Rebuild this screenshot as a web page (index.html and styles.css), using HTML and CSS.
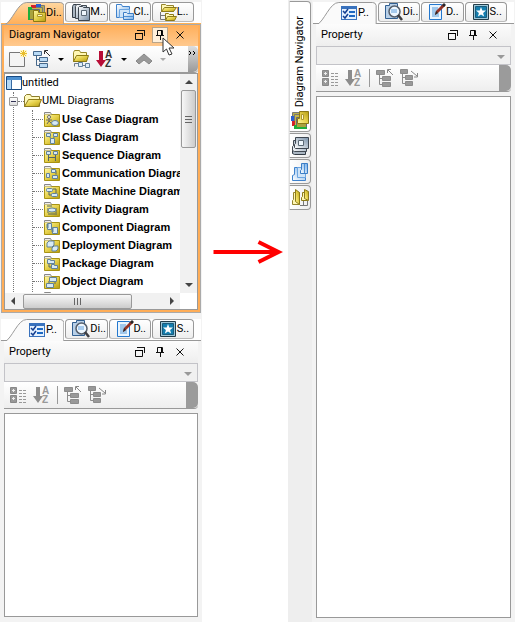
FILE: index.html
```html
<!DOCTYPE html>
<html lang="en">
<head>
<meta charset="utf-8">
<title>Diagram Navigator</title>
<link rel="stylesheet" href="styles.css">
</head>
<body>
<svg class="sprite" aria-hidden="true">
  <defs>
    <linearGradient id="gold" x1="0" y1="0" x2="1" y2="1"><stop offset="0" stop-color="#fff9a8"/><stop offset=".5" stop-color="#e5d04a"/><stop offset="1" stop-color="#b39b10"/></linearGradient>
    <linearGradient id="blue" x1="0" y1="0" x2="1" y2="1"><stop offset="0" stop-color="#fff"/><stop offset="1" stop-color="#75aee8"/></linearGradient>
    <linearGradient id="steel" x1="0" y1="0" x2="1" y2="1"><stop offset="0" stop-color="#fff"/><stop offset="1" stop-color="#7890a8"/></linearGradient>
    <linearGradient id="warm" x1="0" y1="0" x2="0" y2="1"><stop offset="0" stop-color="#ffd7a0"/><stop offset="1" stop-color="#ffae57"/></linearGradient>
  </defs>
  <symbol id="i-stack" viewBox="0 0 18 18">
    <path d="M6.500 11.500v-10h10v10z" fill="#b9b04a" stroke="#777"/><path d="M8 0h5v3H8z" fill="#2a5fd0"/>
    <path d="M3.500 13.500v-10h11v10z" fill="#c3b84c" stroke="#777"/><path d="M3 1h5v3H3zM3 4h1v10H3z" fill="#d2232a"/>
    <path d="M.5 15.500v-10h11v10z" fill="#a8a23e" stroke="#667"/><path d="M0 3h4v3H0zM0 6h2v10H0z" fill="#1fae3a"/>
    <path d="M5.500 17.500v-11h5v2h7v9z" fill="url(#gold)" stroke="#8b7913"/><path d="M9.500 10.500h5v2h-5z" fill="#fffbd0" stroke="#ad982b"/>
  </symbol>
  <symbol id="i-model" viewBox="0 0 18 18">
    <path d="M.5 14.500v-11l1-2h4l1 1h5v12z" fill="#aab6c2" stroke="#333c46"/><path d="M3.500 15.500v-12l1-2h4l1 1h5v13z" fill="url(#steel)" stroke="#414952"/>
    <path d="M6.500 17.500v-13l1-1h3l1 1h6v13z" fill="url(#steel)" stroke="#3d4650"/><path d="M9.500 7.500h5v5h-5z" fill="#eef6fc" stroke="#5a6874"/>
  </symbol>
  <symbol id="i-class" viewBox="0 0 18 18">
    <path d="M.5 14.500v-13h5l1 2h7v11z" fill="url(#blue)" stroke="#3f82cc"/><path d="M3.500 14.500v-8h10v8z" fill="#cfe4f8" stroke="#6ea6e0"/>
    <path d="M7.500 16.500v-7h3l1 1h6v6z" fill="url(#blue)" stroke="#3b7dc5"/><path d="M8 13.500h9" stroke="#4d8fd4"/>
  </symbol>
  <symbol id="i-logical" viewBox="0 0 18 18">
    <path d="M2.500 8.500v-7h4l1 1h7v6z" fill="#fff7b5" stroke="#95852d"/><path d="M2.500 8.500l3-4h12l-3 4z" fill="url(#gold)" stroke="#8d7b19"/>
    <path d="M1.500 9v7.500H7M1.500 12.500H6" fill="none" stroke="#777"/><path d="M6.500 16.500v-6h3l1 1h4v5z" fill="#fff7b5" stroke="#8d7b19"/><path d="M6.500 17.500l2-4h9l-2 4z" fill="url(#gold)" stroke="#8d7b19"/>
  </symbol>
  <symbol id="i-prop" viewBox="0 0 18 18">
    <path d="M1 2h16v14H1z" fill="#3972bd"/><path d="M2 5h14v10H2z" fill="#e4f1ff"/><path d="M9 8h6M9 12h6" stroke="#1d68c3" stroke-width="2"/><path d="M3 7l2 2 3-4M3 12l2 2 3-4" fill="none" stroke="#153f91" stroke-width="1.500"/>
  </symbol>
  <symbol id="i-look" viewBox="0 0 18 18">
    <path d="M.5 15.500v-13h4v-2h8v15z" fill="#b8d0e8" stroke="#315f91"/><circle cx="9.500" cy="8.500" r="5.500" fill="#eef7ff" stroke="#565f6c" stroke-width="1.500"/><path d="M6 6h6v4H6z" fill="#a7cbee"/><path d="M13 12l4 5" stroke="#3e3e42" stroke-width="2.500"/>
  </symbol>
  <symbol id="i-doc" viewBox="0 0 18 18">
    <path d="M1.500 1.500h12v15h-12z" fill="#e9f5ff" stroke="#2478ce"/><path d="M4 5h6M4 7h6M4 9h4M4 11h7M4 13h7" stroke="#569ad8"/><path d="M7 12l1-4 7-7 2 2-7 7z" fill="#943326"/><path d="M7 12l1-4 2 2zM14 2l2-2 2 2-2 2z" fill="#282828"/>
  </symbol>
  <symbol id="i-star" viewBox="0 0 18 18">
    <path d="M1.500 1.500h15v15h-15z" fill="#9ec8d9" stroke="#243c48"/><path d="M3.500 3.500h11v11h-11z" fill="#147eae" stroke="#195b7c"/><path d="M9 4l1.300 3.400 3.700.2-2.900 2.300 1 3.600L9 11.500l-3.100 2 1-3.600L4 7.600l3.700-.2z" fill="#fff"/>
  </symbol>
  <symbol id="i-float" viewBox="0 0 12 12"><path d="M1.500 4.500h7v6h-7zM3 1.500h8M10.500 1v6" fill="none" stroke="#111"/><path d="M1 4h8v1H1z"/></symbol>
  <symbol id="i-pin" viewBox="0 0 12 12"><path d="M3.500 6V1.500h5V6M2 6.500h8M6.500 7v4" fill="none" stroke="#111"/><path d="M7 1h1v5H7z"/></symbol>
  <symbol id="i-close" viewBox="0 0 12 12"><path d="M2.500 2.500l7 7M9.500 2.500l-7 7" stroke="#111"/></symbol>
  <symbol id="i-new" viewBox="0 0 18 18"><path d="M.5 2.500h15v14H.5z" fill="#f4f4f4" stroke="#777"/><path d="M11 0h7v7h-7z" fill="#fff6c8"/><path d="M14.500 0v7M11 3.500h7M12 1l5 5M17 1l-5 5" stroke="#e8bd2c"/></symbol>
  <symbol id="i-tree" viewBox="0 0 18 18"><path d="M3.500 5v10.500h4M3 9.500h4" fill="none" stroke="currentColor"/><path d="M.5 1.500h8v4h-8zM6.500 7.500h8v4h-8zM6.500 13.500h8v4h-8z" fill="var(--node)" stroke="currentColor"/><path d="M17 6l-5-5M11.500 4V.5H15" fill="none" stroke="var(--tip)"/></symbol>
  <symbol id="i-treeout" viewBox="0 0 18 18"><path d="M2.500 4v10.500h4M2 8.500h4" fill="none" stroke="currentColor"/><path d="M.5.500h7v4h-7zM5.500 6.500h7v4h-7zM5.500 12.500h7v4h-7z" fill="var(--node)" stroke="currentColor"/><path d="M11 2l6 5M17.500 4v4H14" fill="none" stroke="var(--tip)"/></symbol>
  <symbol id="i-open" viewBox="0 0 18 18"><path d="M1.500 11.500v-9l1-2h5l1 2h6v9z" fill="#fff7b5" stroke="#998827"/><path d="M1.500 11.500l3-6h12l-2 6z" fill="url(#gold)" stroke="#8b7913"/><path d="M2.500 16.500v-3h5M11 15.500h3" fill="none" stroke="#6c7c8d"/><path d="M6.500 12.500h4v4h-4zM13.500 13.500h4v4h-4z" fill="#e0eefa" stroke="#61809c"/></symbol>
  <symbol id="i-up" viewBox="0 0 18 18"><path d="M9 4l8 7-3 3-5-4-5 4-3-3z" fill="#999" stroke="#888"/></symbol>
  <symbol id="i-cat" viewBox="0 0 18 18"><path d="M1.500 1.500h6v6h-6zM1.500 9.500h6v7h-6z" fill="#999" stroke="#888"/><path d="M3 4.500h3M4.500 3v3M3 12.500h3M4.500 11v3" stroke="#eee"/><path d="M10 4.500h7M10 7.500h7M10 10.500h7M10 13.500h7M10 16.500h7" stroke="#999" stroke-dasharray="3 1"/></symbol>
  <symbol id="i-project" viewBox="0 0 16 16"><path d="M.5 1.500h15v13H.5z" fill="#fff" stroke="#174a83"/><path d="M1 2h14v3H1z" fill="#4e91d1"/><path d="M1 5h4v9H1z" fill="#b4d8f7"/><path d="M5.500 5v9" stroke="#386ba2"/></symbol>
  <symbol id="i-folder" viewBox="0 0 18 16"><path d="M.5 13.500V3.500l2-2h4l1 2h8v10z" fill="#fff9bd" stroke="#8d7d2c"/><path d="M.5 13.500l4-7h13l-3 7z" fill="url(#gold)" stroke="#8d7a19"/></symbol>
  <symbol id="i-base" viewBox="0 0 16 16"><path d="M.5 15.500v-12h15v12z" fill="url(#gold)" stroke="#a89314"/><path d="M.5 3.500v-2h6l1 2" fill="#eee" stroke="#888"/></symbol>
  <symbol id="d-use" viewBox="0 0 16 16"><use href="#i-base"/><circle cx="5" cy="6" r="1.500" fill="#fff" stroke="#666"/><path d="M5 8v2l-2 3M5 10l2 2M2 9h6" stroke="#666" fill="none"/><ellipse cx="11" cy="12" rx="3.500" ry="2.500" fill="#d7eaf5" stroke="#638299"/></symbol>
  <symbol id="d-class" viewBox="0 0 16 16"><use href="#i-base"/><path d="M5 7l3 4 3-4" stroke="#577" fill="none"/><path d="M2.500 4.500h4v3h-4zM9.500 4.500h4v3h-4zM6.500 9.500h4v5h-4z" fill="#d7eaf5" stroke="#638299"/></symbol>
  <symbol id="d-seq" viewBox="0 0 16 16"><use href="#i-base"/><path d="M4.500 7v7M11.500 7v7M5 10.500h6" stroke="#566" fill="none"/><path d="M2.500 4.500h4v3h-4zM9.500 4.500h4v3h-4z" fill="#d7eaf5" stroke="#638299"/></symbol>
  <symbol id="d-com" viewBox="0 0 16 16"><use href="#i-base"/><path d="M4.500 8v4M9 5.500h3v4" stroke="#566" fill="none"/><path d="M2.500 8.500h3v4h-3zM7.500 4.500h4v3h-4zM8.500 10.500h5v3h-5z" fill="#d7eaf5" stroke="#638299"/></symbol>
  <symbol id="d-state" viewBox="0 0 16 16"><use href="#i-base"/><path d="M5 7v5h3M9 6h3v4" stroke="#566" fill="none"/><rect x="2.500" y="5.500" width="6" height="3" rx="1" fill="#d7eaf5" stroke="#638299"/><rect x="7.500" y="10.500" width="6" height="3" rx="1" fill="#d7eaf5" stroke="#638299"/></symbol>
  <symbol id="d-act" viewBox="0 0 16 16"><use href="#i-base"/><path d="M3 5h5M4 13h9M4 7v5M12 7v5" stroke="#566"/><ellipse cx="8" cy="9" rx="4" ry="2" fill="#d7eaf5" stroke="#638299"/></symbol>
  <symbol id="d-comp" viewBox="0 0 16 16"><use href="#i-base"/><path d="M3.500 4.500h4v6h-4zM8.500 8.500h5v6h-5z" fill="#d7eaf5" stroke="#638299"/><path d="M2 6h3M2 8h3M7 10h3M7 12h3" stroke="#638299"/></symbol>
  <symbol id="d-dep" viewBox="0 0 16 16"><use href="#i-base"/><path d="M3 6l2-2h5v4L8 10H3zM8 11l2-2h4v3l-2 2H8z" fill="#d7eaf5" stroke="#638299"/></symbol>
  <symbol id="d-pack" viewBox="0 0 16 16"><use href="#i-base"/><path d="M5 8v4h3" stroke="#566" fill="none"/><path d="M3.500 8.500v-4h3v1h4v3zM7.500 13.500v-4h3v1h3v3z" fill="#d7eaf5" stroke="#638299"/></symbol>
  <symbol id="d-obj" viewBox="0 0 16 16"><use href="#i-base"/><path d="M5 8v4M11 6v5" stroke="#566"/><path d="M5.500 4.500h7v4h-7zM2.500 10.500h7v4h-7z" fill="#d7eaf5" stroke="#638299"/></symbol>
</svg>

<main class="scene">
  <section class="dock">
    <section class="panel navigator">
      <nav class="tabs">
        <button class="tab active"><svg class="shape" viewBox="0 0 64 22" preserveAspectRatio="none"><path d="M4 22.500C11 20 17 0 26 .5h34q3 0 3.500 3v19" fill="url(#warm)" stroke="#999"/></svg><svg class="icon"><use href="#i-stack"/></svg><span>Di..</span></button>
        <button class="tab"><svg class="icon"><use href="#i-model"/></svg><span>M..</span></button>
        <button class="tab"><svg class="icon"><use href="#i-class"/></svg><span>Cl..</span></button>
        <button class="tab"><svg class="icon"><use href="#i-logical"/></svg><span>L..</span></button>
      </nav>
      <div class="frame">
        <header class="title"><h2>Diagram Navigator</h2>
          <button aria-label="Float"><svg><use href="#i-float"/></svg></button>
          <button class="hover" aria-label="Pin"><svg><use href="#i-pin"/></svg><svg class="cursor" viewBox="0 0 14 20"><path d="M1 1v14l3.500-3 2.500 6 3-1-3-6h5z" fill="#fff" stroke="#333"/></svg></button>
          <button aria-label="Close"><svg><use href="#i-close"/></svg></button>
        </header>
        <div class="toolbar color">
          <button aria-label="New"><svg><use href="#i-new"/></svg></button>
          <button class="drop" aria-label="Expand"><svg><use href="#i-tree"/></svg></button>
          <button aria-label="Open"><svg><use href="#i-open"/></svg></button>
          <button class="drop" aria-label="Sort"><svg viewBox="0 0 18 18"><path d="M3 1h4v9h3l-5 7-5-7h3z" fill="var(--arrow)"/><text x="9" y="8" class="glyph">A</text><text x="9" y="17" class="glyph">Z</text></svg></button>
          <button class="drop off" aria-label="Up"><svg><use href="#i-up"/></svg></button>
          <button class="grip" aria-label="More"><svg viewBox="0 0 10 6"><path d="M1 0l2 2-2 2M5 0l2 2-2 2" fill="none" stroke="#000"/></svg></button>
        </div>
        <div class="treebox">
          <div class="view">
            <div class="row"><svg class="project"><use href="#i-project"/></svg>untitled</div>
            <div class="branch">
              <div class="row"><button class="toggle" aria-label="Collapse"></button><svg class="folder"><use href="#i-folder"/></svg>UML Diagrams</div>
              <ul class="leaves">
                <li><svg><use href="#d-use"/></svg>Use Case Diagram</li>
                <li><svg><use href="#d-class"/></svg>Class Diagram</li>
                <li><svg><use href="#d-seq"/></svg>Sequence Diagram</li>
                <li><svg><use href="#d-com"/></svg>Communication Diagram</li>
                <li><svg><use href="#d-state"/></svg>State Machine Diagram</li>
                <li><svg><use href="#d-act"/></svg>Activity Diagram</li>
                <li><svg><use href="#d-comp"/></svg>Component Diagram</li>
                <li><svg><use href="#d-dep"/></svg>Deployment Diagram</li>
                <li><svg><use href="#d-pack"/></svg>Package Diagram</li>
                <li><svg><use href="#d-obj"/></svg>Object Diagram</li>
                <li><svg><use href="#i-base"/></svg></li>
              </ul>
            </div>
          </div>
          <div class="vbar"><i class="tri up"></i><div class="thumb"></div><i class="tri down"></i></div>
          <div class="hbar"><i class="tri left"></i><div class="thumb"></div><i class="tri right"></i></div>
        </div>
      </div>
    </section>
    <section class="panel property">
      <nav class="tabs">
        <button class="tab active"><svg class="shape" viewBox="0 0 64 22" preserveAspectRatio="none"><path d="M4 22.500C11 20 17 0 26 .5h34q3 0 3.500 3v19" fill="#fafafa" stroke="#999"/></svg><svg class="icon"><use href="#i-prop"/></svg><span>P..</span></button>
        <button class="tab"><svg class="icon"><use href="#i-look"/></svg><span>Di..</span></button>
        <button class="tab"><svg class="icon"><use href="#i-doc"/></svg><span>D..</span></button>
        <button class="tab"><svg class="icon"><use href="#i-star"/></svg><span>S..</span></button>
      </nav>
      <div class="frame">
        <header class="title"><h2>Property</h2>
          <button aria-label="Float"><svg><use href="#i-float"/></svg></button>
          <button aria-label="Pin"><svg><use href="#i-pin"/></svg></button>
          <button aria-label="Close"><svg><use href="#i-close"/></svg></button>
        </header>
        <div class="combo"><select disabled aria-label="Element"><option></option></select><i class="tri down"></i></div>
        <div class="toolbar">
          <button disabled aria-label="Categorize"><svg><use href="#i-cat"/></svg></button>
          <button disabled aria-label="Sort"><svg viewBox="0 0 18 18"><path d="M3 1h4v9h3l-5 7-5-7h3z" fill="var(--arrow)"/><text x="9" y="8" class="glyph">A</text><text x="9" y="17" class="glyph">Z</text></svg></button>
          <span class="sep"></span>
          <button disabled aria-label="Collapse"><svg><use href="#i-tree"/></svg></button>
          <button disabled aria-label="Expand"><svg><use href="#i-treeout"/></svg></button>
          <span class="grip"></span>
        </div>
        <div class="content"></div>
      </div>
    </section>
  </section>

  <div class="between"><svg viewBox="0 0 70 24"><path d="M0 12h65M45 2l20 10-20 10" fill="none" stroke="#f00" stroke-width="4"/></svg></div>

  <section class="result">
    <nav class="rail">
      <button class="long"><span>Diagram Navigator</span><svg><use href="#i-stack"/></svg></button>
      <button aria-label="Model"><svg><use href="#i-model"/></svg></button>
      <button aria-label="Class"><svg><use href="#i-class"/></svg></button>
      <button aria-label="Logical"><svg><use href="#i-logical"/></svg></button>
    </nav>
    <section class="panel property">
      <nav class="tabs">
        <button class="tab active"><svg class="shape" viewBox="0 0 64 22" preserveAspectRatio="none"><path d="M4 22.500C11 20 17 0 26 .5h34q3 0 3.500 3v19" fill="#fafafa" stroke="#999"/></svg><svg class="icon"><use href="#i-prop"/></svg><span>P..</span></button>
        <button class="tab"><svg class="icon"><use href="#i-look"/></svg><span>Di..</span></button>
        <button class="tab"><svg class="icon"><use href="#i-doc"/></svg><span>D..</span></button>
        <button class="tab"><svg class="icon"><use href="#i-star"/></svg><span>S..</span></button>
      </nav>
      <div class="frame">
        <header class="title"><h2>Property</h2>
          <button aria-label="Float"><svg><use href="#i-float"/></svg></button>
          <button aria-label="Pin"><svg><use href="#i-pin"/></svg></button>
          <button aria-label="Close"><svg><use href="#i-close"/></svg></button>
        </header>
        <div class="combo"><select disabled aria-label="Element"><option></option></select><i class="tri down"></i></div>
        <div class="toolbar">
          <button disabled aria-label="Categorize"><svg><use href="#i-cat"/></svg></button>
          <button disabled aria-label="Sort"><svg viewBox="0 0 18 18"><path d="M3 1h4v9h3l-5 7-5-7h3z" fill="var(--arrow)"/><text x="9" y="8" class="glyph">A</text><text x="9" y="17" class="glyph">Z</text></svg></button>
          <span class="sep"></span>
          <button disabled aria-label="Collapse"><svg><use href="#i-tree"/></svg></button>
          <button disabled aria-label="Expand"><svg><use href="#i-treeout"/></svg></button>
          <span class="grip"></span>
        </div>
        <div class="content"></div>
      </div>
    </section>
  </section>
</main>
</body>
</html>
```
FILE: styles.css
```css
* { box-sizing: border-box; }
body { margin: 0; background: #fff; color: #000; font: 11px/14px Roboto, "Liberation Sans", sans-serif; }
button { border: 0; padding: 0; background: none; font: inherit; color: inherit; }
svg { display: block; flex: none; }
.sprite { position: absolute; width: 0; height: 0; }
.glyph { font: bold 10px "Liberation Sans", sans-serif; fill: var(--letter); }

.scene { display: grid; grid-template-columns: 202fr 86fr 227fr; min-height: 100vh; }
.dock { display: flex; flex-direction: column; gap: 4px; background: #f3f3f3; min-width: 0; }
.panel { display: flex; flex-direction: column; min-width: 0; padding: 2px 1px 0; }
.property { flex: 1; padding-bottom: 4px; }
.dock .property { padding-bottom: 5px; }
.frame { display: flex; flex-direction: column; flex: 1; padding: 0 3px; }

.tabs { display: grid; grid-template-columns: 63fr 42fr 42fr 42fr; gap: 1px; height: 22px; padding-right: 7px; background: #fff; border-bottom: 1px solid #999; }
.tab { position: relative; display: flex; align-items: center; min-width: 0; height: 20px; padding-left: 6px; border: 1px solid #999; border-bottom-color: #bbb; border-radius: 4px 4px 3px 3px; background: linear-gradient(#fff, #eee); white-space: nowrap; }
.tab.active { height: 22px; padding-left: 27px; border: 0; background: none; }
.tab .shape { position: absolute; inset: 0; width: 100%; height: 22px; }
.tab .icon { position: relative; width: 18px; height: 18px; }
.tab span { position: relative; }

.title { display: flex; align-items: center; gap: 4px; height: 22px; padding: 0 10px 0 5px; background: linear-gradient(#fcfcfc, #eee); }
.title h2 { flex: 1; margin: 0; font: inherit; }
.title button { position: relative; display: flex; align-items: center; justify-content: center; width: 16px; height: 16px; }
.title svg { width: 12px; height: 12px; }
.title .hover { border: 1px solid #b9a58a; background: #fff0dc; }
.title .cursor { position: absolute; left: 9px; top: 9px; width: 14px; height: 20px; z-index: 2; }

.navigator .tabs { border-bottom-color: #ffb052; }
.navigator .frame { border: solid #ffad57; border-width: 0 3px 3px; outline: 1px solid #aaa; outline-offset: -1px; padding: 0; }
.navigator .title { background: linear-gradient(#ffad57, #ffc98e); }

.toolbar { --node: #999; --tip: #888; --arrow: #8c8c8c; --letter: #999; color: #8c8c8c; display: flex; align-items: center; gap: 6px; height: 27px; padding-left: 5px; background: linear-gradient(#fff, #eee); border-bottom: 1px solid #999; border-radius: 0 4px 4px 0; }
.toolbar svg { width: 18px; height: 18px; }
.toolbar.color { --node: #b9daf5; --tip: #333; --arrow: #b80d36; --letter: #333; color: #46688b; }
.toolbar .drop { display: flex; align-items: center; gap: 7px; padding-right: 2px; }
.toolbar .drop::after { content: ""; border: solid transparent; border-width: 3px 3px 0; border-top-color: #000; }
.toolbar .off::after { border-top-color: #aaa; }
.sep { width: 1px; height: 18px; background: #999; }
.grip { align-self: stretch; flex: none; width: 12px; margin-left: auto; background: #9b9b9b; border-radius: 0 5px 5px 0; }
.color .grip { display: flex; align-items: flex-start; width: 10px; padding-top: 5px; background: linear-gradient(#ddd, #999); }
.color .grip svg { width: 10px; height: 6px; }

.combo { position: relative; height: 19px; }
.combo select { display: block; width: 100%; height: 19px; appearance: none; border: 1px solid #b0b0b6; border-radius: 0; background: #efefef; }
.combo .tri { position: absolute; right: 6px; top: 9px; }
.content { flex: 1; margin-top: 4px; border: 1px solid #999; background: #fff; }
.tri { width: 0; height: 0; border: 4px solid transparent; }
.tri.down { border-bottom: 0; border-top-color: #999; }
.tri.up { border-top: 0; border-bottom-color: #444; }
.tri.left { border-left: 0; border-right-color: #444; }
.tri.right { border-right: 0; border-left-color: #444; }

.treebox { display: grid; grid-template-columns: minmax(0, 1fr) 17px; grid-template-rows: 219px 16px; border: 1px solid #999; background: #fff; }
.view { overflow: hidden; }
.row { display: flex; align-items: center; height: 18px; white-space: nowrap; }
.row .project { width: 16px; height: 16px; margin-left: 1px; }
.branch { margin-left: 8px; border-left: 1px dotted #777; }
.toggle { position: relative; width: 9px; height: 9px; margin-left: -5px; border: 1px solid #999; border-radius: 1px; background: linear-gradient(#fff, #ddd); }
.toggle::after { content: ""; position: absolute; left: 1px; right: 1px; top: 3px; height: 1px; background: #335; }
.branch .row::before { content: ""; order: 1; width: 6px; border-top: 1px dotted #777; }
.toggle { order: 0; }
.branch .row { display: grid; grid-template-columns: 4px 6px 18px 1fr; }
.branch .row::before { grid-column: 2; grid-row: 1; }
.branch .toggle { grid-column: 1; grid-row: 1; }
.branch .folder { grid-column: 3; grid-row: 1; width: 18px; height: 16px; }
.leaves { list-style: none; margin: 0 0 0 18px; padding: 0; border-left: 1px dotted #777; }
.leaves li { display: flex; align-items: center; height: 18px; white-space: nowrap; font: bold 11px/18px "Liberation Sans", sans-serif; }
.leaves li::before { content: ""; flex: none; width: 10px; border-top: 1px dotted #777; }
.leaves svg { width: 16px; height: 16px; margin: 0 2px 0 1px; }

.vbar, .hbar { display: flex; align-items: center; background: #f1f1f1; }
.vbar { flex-direction: column; padding: 6px 0; }
.vbar .tri.down { margin-top: auto; border-top-color: #444; }
.thumb { border: 1px solid #999; border-radius: 2px; background: linear-gradient(90deg, #f7f7f7, #ccc); display: flex; align-items: center; justify-content: center; }
.vbar .thumb { width: 15px; height: 58px; margin-top: 6px; }
.thumb::after { content: ""; width: 7px; height: 7px; background: repeating-linear-gradient(#666 0 1px, transparent 1px 3px); }
.hbar { grid-column: 1 / 2; padding: 0 6px; }
.hbar .thumb { width: 109px; height: 15px; margin-left: 8px; background: linear-gradient(#f7f7f7, #ccc); }
.hbar .thumb::after { background: repeating-linear-gradient(90deg, #666 0 1px, transparent 1px 3px); }
.hbar .tri.right { margin-left: auto; }

.between { padding: 240px 4px 0 11px; }
.between svg { width: 100%; height: 24px; }

.result { display: flex; background: #f3f3f3; min-width: 0; }
.rail { display: flex; flex-direction: column; gap: 1px; width: 24px; padding: 1px 1px 0; background: #eee; }
.rail button { display: flex; align-items: center; justify-content: center; width: 22px; height: 25px; border: 1px solid #999; border-left-color: #ddd; border-radius: 0 4px 4px 0; background: linear-gradient(90deg, #fff, #eee); }
.rail svg { width: 18px; height: 18px; transform: rotate(-90deg); }
.rail .long { flex-direction: column; justify-content: flex-end; height: 131px; gap: 4px; padding-bottom: 2px; background: #fff; }
.rail span { writing-mode: vertical-rl; transform: rotate(180deg); white-space: nowrap; }
```
